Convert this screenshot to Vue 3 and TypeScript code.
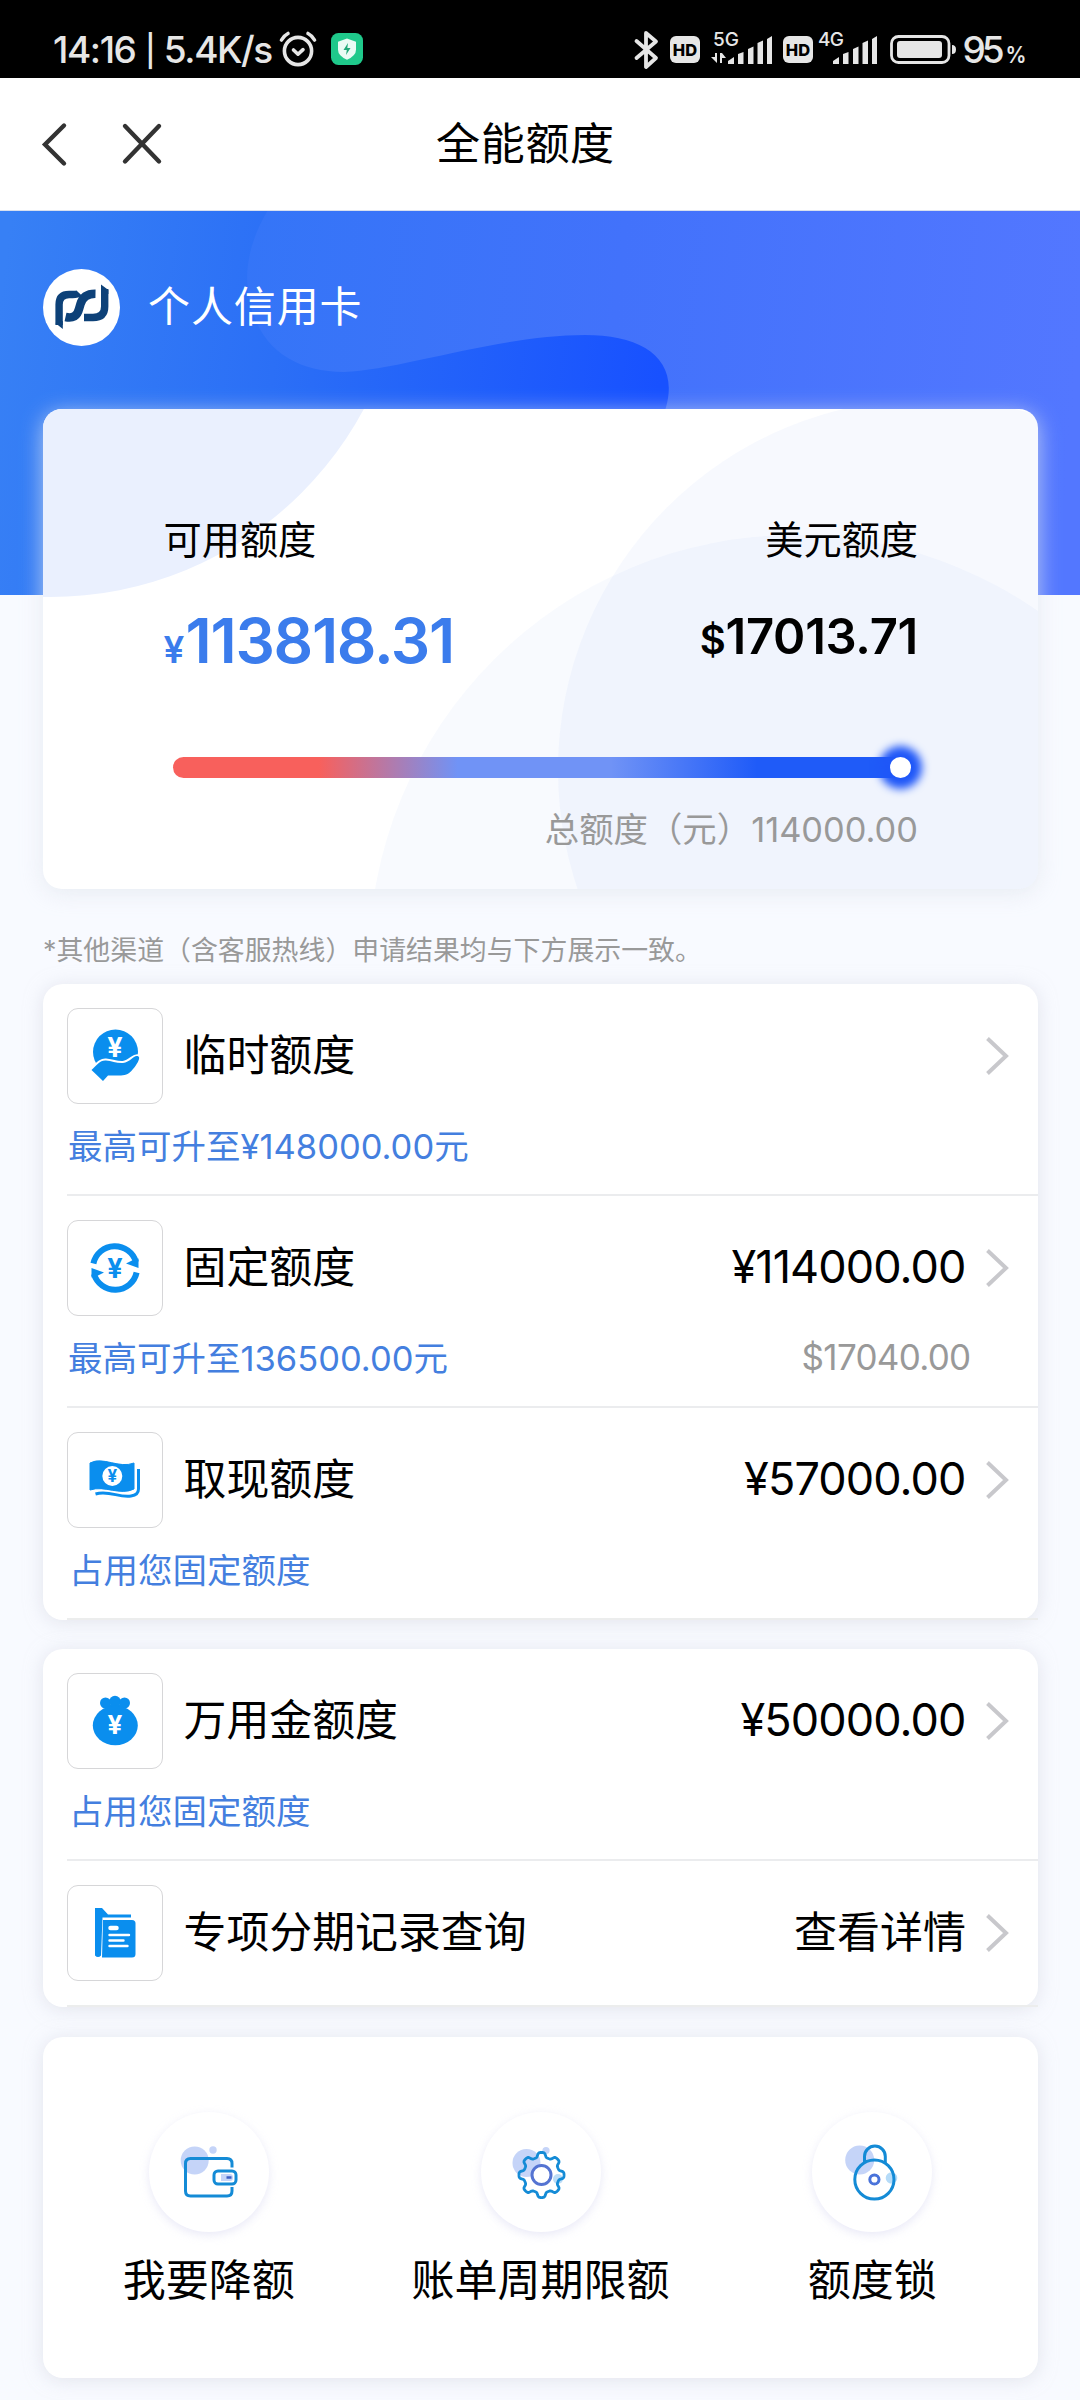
<script setup lang="ts">
interface LimitRow {
  icon: 'hand' | 'cycle' | 'cash' | 'bag' | 'file'
  title: string
  note?: string
  noteIndent?: boolean
  value?: string
  valueIsText?: boolean
  sub?: string
}

const groups: LimitRow[][] = [
  [
    { icon: 'hand', title: '临时额度', note: '最高可升至¥148000.00元' },
    { icon: 'cycle', title: '固定额度', note: '最高可升至136500.00元', value: '¥114000.00', sub: '$17040.00' },
    { icon: 'cash', title: '取现额度', note: '占用您固定额度', noteIndent: true, value: '¥57000.00' },
  ],
  [
    { icon: 'bag', title: '万用金额度', note: '占用您固定额度', noteIndent: true, value: '¥50000.00' },
    { icon: 'file', title: '专项分期记录查询', value: '查看详情', valueIsText: true },
  ],
]

const actions: { icon: 'wallet' | 'gear' | 'lock'; label: string }[] = [
  { icon: 'wallet', label: '我要降额' },
  { icon: 'gear', label: '账单周期限额' },
  { icon: 'lock', label: '额度锁' },
]

// Rounded cog outline: eight teeth around (60.5, 63)
const gearPath = (() => {
  const pts: string[] = []
  const steps = 160
  for (let i = 0; i <= steps; i++) {
    const a = (i / steps) * Math.PI * 2
    const wave = Math.tanh(2.2 * Math.cos(8 * a))
    const r = 20.2 + 2.4 * wave
    pts.push(`${(60.5 + r * Math.cos(a)).toFixed(2)} ${(63 + r * Math.sin(a)).toFixed(2)}`)
  }
  return 'M' + pts.join('L') + 'Z'
})()
</script>

<template>
  <div class="page">
    <div class="status">
      <span class="clock">14:16 <u>|</u> 5.4K/s</span>
      <svg class="alarm" width="38" height="38" viewBox="0 0 38 38" fill="none" stroke="#e6e6e6" stroke-width="3.6" stroke-linecap="round">
        <circle cx="19" cy="21" r="13.6" />
        <path d="M14.5 20l4.5 4.2 5-4.6" stroke-linejoin="round" />
        <path d="M2.500 10q2.500-4.500 6.500-6.500M35.500 10q-2.500-4.500-6.500-6.500" />
      </svg>
      <svg class="guard" width="32" height="32" viewBox="0 0 32 32">
        <rect width="32" height="32" rx="7.500" fill="#1fc98b" />
        <path d="M16 5.500l9 3.300v8q0 6-9 10-9-4-9-10v-8z" fill="#e9fbf4" />
        <path d="M17 10l-4.500 7h3.300l-.8 5 4.500-7h-3.200z" fill="#1fa878" />
      </svg>
      <svg class="signals" width="400" height="78" viewBox="632 0 400 78" fill="#e6e6e6">
        <path d="M636.500 41l19.500 17-10 9V33L656 41.500 636.500 58" fill="none" stroke="#e6e6e6" stroke-width="3.800" stroke-linejoin="round" stroke-linecap="round" />
        <rect x="670" y="36" width="30" height="27" rx="6" />
        <text x="685" y="55.500" text-anchor="middle" font-size="16.500" font-weight="800" fill="#000">HD</text>
        <text x="713" y="46" font-size="19" font-weight="500" textLength="26">5G</text>
        <path d="M711 57h4v-4h2v10zM720 53h2l4 5h-4v5h-2z" />
        <path d="M728 64v-3l6-4v7zM738 64V54l5.500-2v12zM748 64V49l5.500-2.500V64zM757.500 64V43l5.500-2.500V64zM767 64V39l5-3v28z" />
        <rect x="783" y="36" width="30" height="27" rx="6" />
        <text x="798" y="55.500" text-anchor="middle" font-size="16.500" font-weight="800" fill="#000">HD</text>
        <text x="818" y="46" font-size="19" font-weight="500" textLength="26">4G</text>
        <path transform="translate(105 0)" d="M728 64v-3l6-4v7zM738 64V54l5.500-2v12zM748 64V49l5.500-2.500V64zM757.500 64V43l5.500-2.500V64zM767 64V39l5-3v28z" />
        <rect x="891.500" y="36.500" width="57.500" height="26" rx="7" fill="none" stroke="#e6e6e6" stroke-width="2.800" />
        <rect x="897" y="41" width="45" height="17" rx="3" />
        <path d="M952 45q4 0 4 4.500t-4 4.500z" />
        <text x="962.500" y="63" font-size="37" font-weight="500" textLength="42">95</text>
        <text x="1005.500" y="62.500" font-size="23" font-weight="600" textLength="21" lengthAdjust="spacingAndGlyphs">%</text>
      </svg>
    </div>

    <header class="nav">
      <svg width="130" height="60" viewBox="0 0 130 60" fill="none" stroke="#333" stroke-width="4.400" stroke-linecap="round">
        <path d="M23 11.500L4 30.500 23 49.500M84 12l34 35.500M118 12L84 47.500" />
      </svg>
      <h1>全能额度</h1>
    </header>

    <section class="hero">
      <svg class="hero-bg" width="1080" height="384" viewBox="0 211 1080 384">
        <defs>
          <linearGradient id="deep" gradientUnits="userSpaceOnUse" x1="0" y1="300" x2="660" y2="380">
            <stop offset="0" stop-color="#3780f5" />
            <stop offset=".42" stop-color="#2b6ff6" />
            <stop offset="1" stop-color="#1851ff" />
          </linearGradient>
          <linearGradient id="lift" gradientUnits="userSpaceOnUse" x1="240" y1="260" x2="1080" y2="340">
            <stop offset="0" stop-color="#3475f7" />
            <stop offset=".45" stop-color="#4272fb" />
            <stop offset="1" stop-color="#5377ff" />
          </linearGradient>
        </defs>
        <rect y="210" width="1080" height="385" fill="url(#deep)" />
        <path d="M268 210C250 240 245 268 248 290C254 345 292 372 344 372C400 370 500 335 585 335C650 335 690 365 657 430V595H1080V210Z" fill="url(#lift)" />
      </svg>
      <div class="owner">
        <svg width="77" height="77" viewBox="0 0 77 77" fill="none" stroke="#0d4178" stroke-width="7.400">
          <circle cx="38.500" cy="38.500" r="38.500" fill="#fff" stroke="none" />
          <path d="M16.100 56V35.500q0-10 10-10h3.500q5 0 6.500-1.500" />
          <path d="M12.400 54l7.400 6v-8z" fill="#0d4178" stroke="none" />
          <path d="M22.500 48q11 2.500 13.500-8l1.500-5q3-10.500 15-10.300" stroke-width="8.600" />
          <path d="M41 48.500h9q11.700 0 11.700-11V20" />
          <path d="M58 15.500l7.400 5.500v4H58z" fill="#0d4178" stroke="none" />
        </svg>
        <span>个人信用卡</span>
      </div>
    </section>

    <main>
      <section class="balance">
        <svg class="balance-bg" width="995" height="480" viewBox="43 409 995 480">
          <circle cx="50" cy="241" r="356" fill="#eaf0fe" />
          <circle cx="795" cy="961" r="426" fill="#4070f0" fill-opacity=".035" />
          <circle cx="929" cy="770" r="371" fill="#4070f0" fill-opacity=".045" />
        </svg>
        <div class="balance-body">
          <div class="labels"><span>可用额度</span><span>美元额度</span></div>
          <div class="amounts">
            <span class="cny"><i>¥</i>113818.31</span>
            <span class="usd"><i>$</i>17013.71</span>
          </div>
          <div class="track"><b></b></div>
          <div class="total">总额度（元）<em>114000.00</em></div>
        </div>
      </section>

      <p class="tip">*其他渠道（含客服热线）申请结果均与下方展示一致。</p>

      <section v-for="(rows, g) in groups" :key="g" class="group">
        <article v-for="row in rows" :key="row.title" class="row">
          <div class="line">
            <div class="box">
              <svg v-if="row.icon === 'hand'" width="96" height="96" viewBox="0 0 96 96" fill="#0a8eee">
                <circle cx="48.500" cy="44" r="22.500" />
                <path d="M24.500 62C30 57 33 52 39 52.500C45 53 50 55.500 56 55C64 54 67 46 71.500 48.500C74 50 69 58 66 61C61 68 56 67.500 50 67.500H41L36 73Z" stroke="#fff" stroke-width="4" paint-order="stroke" stroke-linejoin="round" />
                <text x="48" y="49" text-anchor="middle" font-size="27" font-weight="700" fill="#fff">¥</text>
              </svg>
              <svg v-else-if="row.icon === 'cycle'" width="96" height="96" viewBox="0 0 96 96" fill="#0a8eee">
                <path d="M26.400 43.500A22 22 0 0 1 69 42" fill="none" stroke="#0a8eee" stroke-width="6" />
                <path d="M69.600 52.500A22 22 0 0 1 27 54" fill="none" stroke="#0a8eee" stroke-width="6" />
                <path d="M71.500 38.500v9.500L59 43.500l8-4zM24.500 57.500V48L37 52.500l-8 4z" />
                <text x="48" y="57.500" text-anchor="middle" font-size="27" font-weight="700">¥</text>
              </svg>
              <svg v-else-if="row.icon === 'cash'" width="96" height="96" viewBox="0 0 96 96" fill="#0a8eee">
                <path d="M23 31C36 24 52 37 67 31V57C53 64 38 53 23 58Z" stroke="#0a8eee" stroke-width="1" stroke-linejoin="round" />
                <path d="M28.500 62C42 58 52 66 64 64Q71.500 63 71.500 57V37" fill="none" stroke="#0a8eee" stroke-width="3" />
                <circle cx="45.300" cy="44" r="10" fill="#fff" />
                <text x="45.300" y="50.200" text-anchor="middle" font-size="17" font-weight="700">¥</text>
              </svg>
              <svg v-else-if="row.icon === 'bag'" width="96" height="96" viewBox="0 0 96 96" fill="#0a8eee">
                <circle cx="38.500" cy="30" r="5.500" />
                <circle cx="48" cy="28.500" r="5.800" />
                <circle cx="57.500" cy="30" r="5.500" />
                <path d="M36 32h24l-2.500 4 5 6H34l4.500-6z" />
                <ellipse cx="48.300" cy="52.500" rx="22.500" ry="19.800" />
                <text x="48" y="60.500" text-anchor="middle" font-size="26" font-weight="700" fill="#fff">¥</text>
              </svg>
              <svg v-else width="96" height="96" viewBox="0 0 96 96" fill="#0a8eee">
                <path d="M28 23h7l6 6.500h23v3H35.500l-1.500 38q-3 3-6 0z" />
                <path d="M36 35h29q3.500 0 3.500 3.500V69q0 3.500-3.500 3.500H35z" />
                <g stroke="#fff" stroke-linecap="round">
                  <path d="M43.500 43h6" stroke-width="4.500" />
                  <path d="M42.500 50h19.500M42.500 55.500h14M42.500 61h18" stroke-width="2.400" />
                </g>
              </svg>
            </div>
            <span class="title">{{ row.title }}</span>
            <span class="value" :class="{ words: row.valueIsText }">{{ row.value }}</span>
            <svg class="chev" width="24" height="40" viewBox="0 0 24 40" fill="none" stroke="#c8c8cc" stroke-width="4">
              <path d="M2.500 2.500L21 20 2.500 37.500" />
            </svg>
          </div>
          <div v-if="row.note" class="note">
            <span :class="{ indent: row.noteIndent }">{{ row.note }}</span>
            <span v-if="row.sub" class="sub">{{ row.sub }}</span>
          </div>
        </article>
      </section>

      <section class="actions">
        <div v-for="act in actions" :key="act.icon" class="action">
          <svg width="120" height="120" viewBox="0 0 120 120" fill="none" stroke="#148bd6" stroke-width="3">
            <template v-if="act.icon === 'wallet'">
              <circle cx="45.700" cy="48.500" r="14" fill="#c5d4f8" stroke="none" />
              <circle cx="64" cy="38" r="3.700" fill="#c5d4f8" stroke="none" />
              <path d="M83 55.500V51.500q0-5-5-5H41.500q-5 0-5 5V79q0 5 5 5H78q5 0 5-5v-4" />
              <rect x="65" y="59" width="22" height="13" rx="4" fill="#fff" />
              <path d="M72 62h9q3 0 3 3.500t-3 3.500h-9z" fill="#c5d4f8" stroke="none" />
              <path d="M77.500 65.500h5" stroke="#3d5fc4" stroke-width="2.600" />
            </template>
            <template v-else-if="act.icon === 'gear'">
              <circle cx="45.500" cy="51" r="14" fill="#c5d4f8" stroke="none" />
              <circle cx="65" cy="38.500" r="3.600" fill="#c5d4f8" stroke="none" />
              <circle cx="77" cy="67" r="5" fill="#bcdcf7" stroke="none" />
              <path :d="gearPath" stroke-linejoin="round" stroke-width="2.800" />
              <circle cx="60.500" cy="63" r="9.500" fill="#fff" stroke="#5574d2" />
            </template>
            <template v-else>
              <circle cx="47.700" cy="48" r="14.500" fill="#c5d4f8" stroke="none" />
              <circle cx="79.500" cy="66" r="5.800" fill="#b5dbf8" stroke="none" />
              <path d="M52.500 51V44.500a10.400 10.400 0 0 1 20.800 0V51" />
              <circle cx="62.400" cy="67.500" r="19.600" />
              <circle cx="62.400" cy="67.500" r="4.600" stroke="#4a73da" />
            </template>
          </svg>
          <span>{{ act.label }}</span>
        </div>
      </section>
    </main>
  </div>
</template>

<style>
body {
  background: #f8faff;
}
</style>

<style scoped>
.page {
  width: 1080px;
  height: 2400px;
  overflow: hidden;
  background: #f8faff;
  color: #000;
  font-family: Inter, "Noto Sans CJK SC", sans-serif;
  display: flex;
  flex-direction: column;
}
i,
em {
  font-style: normal;
}
.status {
  height: 78px;
  flex: none;
  background: #000;
  color: #e6e6e6;
  display: flex;
  align-items: center;
}
.clock {
  margin-left: 53px;
  width: 225px;
  padding-top: 22px;
  font-size: 37px;
  line-height: 44px;
  font-weight: 500;
  letter-spacing: -1.400px;
  white-space: nowrap;
}
.clock u {
  text-decoration: none;
  font-size: 31px;
  vertical-align: 1px;
  padding: 0 1px;
}
.alarm {
  margin: 19px 0 0 1px;
}
.guard {
  margin: 20px 0 0 14px;
}
.signals {
  margin-left: auto;
  margin-right: 48px;
}
.nav {
  height: 132px;
  flex: none;
  background: #fff;
  border-bottom: 1px solid #d9e0ee;
  display: flex;
  align-items: center;
}
.nav svg {
  margin-left: 41px;
}
.nav h1 {
  margin: 0 0 0 265px;
  font-size: 44px;
  line-height: 60px;
  font-weight: 400;
  letter-spacing: 0.700px;
}
.hero {
  display: grid;
  height: 384px;
  flex: none;
}
.hero > * {
  grid-area: 1 / 1;
}
.hero-bg {
  display: block;
}
.owner {
  display: flex;
  align-items: center;
  align-self: start;
  gap: 28px;
  margin: 58px 0 0 43px;
  z-index: 1;
  color: #fff;
  font-size: 42px;
  line-height: 60px;
  letter-spacing: 0.900px;
}
.owner span {
  margin-top: -2px;
}
main {
  margin: -186px 42px 0 43px;
  position: relative;
}
.balance {
  height: 480px;
  border-radius: 19px;
  background: #fff;
  box-shadow: 0 4px 22px rgba(226, 231, 238, 0.750);
  display: grid;
}
.balance > * {
  grid-area: 1 / 1;
}
.balance-bg {
  border-radius: 19px;
}
.balance-body {
  padding: 106px 120px 0 120.500px;
  z-index: 1;
}
.labels {
  display: flex;
  justify-content: space-between;
  font-size: 38.200px;
  line-height: 50px;
}
.amounts {
  display: flex;
  justify-content: space-between;
  align-items: flex-start;
  height: 80px;
  margin-top: 38px;
  font-weight: 600;
  white-space: nowrap;
}
.cny {
  color: #3b7cec;
  font-size: 62px;
  line-height: 76px;
  letter-spacing: -1.300px;
}
.cny i {
  font-size: 37px;
  margin-right: 2.500px;
}
.usd {
  padding-top: 1px;
  font-size: 49px;
  line-height: 66px;
  letter-spacing: -0.300px;
}
.usd i {
  font-size: 40px;
}
.track {
  margin: 74px 0 0 9px;
  width: 730px;
  height: 21px;
  border-radius: 11px;
  background: linear-gradient(90deg, #f8605c 0%, #f8605c 20%, #7093f6 39%, #7093f6 60%, #1f5bf8 80%, #1f5bf8 100%);
  display: flex;
  align-items: center;
  justify-content: flex-end;
}
.track b {
  width: 21px;
  height: 21px;
  margin-right: -8px;
  border-radius: 50%;
  background: #fff;
  box-shadow: 0 0 9px 11px #1f57f8;
}
.total {
  margin-top: 27px;
  text-align: right;
  color: #999;
  font-size: 34.400px;
  line-height: 50px;
  white-space: nowrap;
}
.tip {
  margin: 41px 0 0 0;
  height: 40px;
  color: #999;
  font-size: 26.900px;
  line-height: 40px;
  white-space: nowrap;
}
.group {
  background: #fff;
  border-radius: 20px;
  box-shadow: 0 2px 18px rgba(205, 208, 218, 0.500);
  margin-top: 29px;
}
.tip + .group {
  margin-top: 14px;
}
.row {
  margin-left: 24px;
  padding-top: 24px;
  border-bottom: 2px solid #ebecee;
  height: 186px;
}
.row:not(:has(.note)) {
  height: 120px;
}
.row:last-child {
  border-bottom-color: #eceded;
}
.line {
  display: flex;
  align-items: center;
  height: 96px;
}
.box {
  box-sizing: border-box;
  width: 96px;
  height: 96px;
  border: 1px solid #d6d6d8;
  border-radius: 11px;
  display: flex;
  align-items: center;
  justify-content: center;
  flex: none;
}
.box svg {
  flex: none;
}
.title {
  margin-left: 20.500px;
  font-size: 42.900px;
  line-height: 60px;
  white-space: nowrap;
  margin-top: -2px;
}
.value {
  margin-left: auto;
  margin-right: 19.500px;
  margin-top: -2px;
  font-size: 45px;
  line-height: 60px;
  letter-spacing: -0.900px;
}
.value.words {
  font-size: 43px;
  letter-spacing: 0;
  margin-right: 19px;
}
.chev {
  margin-right: 29px;
  flex: none;
}
.note {
  display: flex;
  justify-content: space-between;
  height: 80px;
  align-items: center;
  color: #447fdf;
  font-size: 34.500px;
  white-space: nowrap;
  padding-left: 1px;
}
.indent {
  padding-left: 1px;
}
.sub {
  color: #999;
  margin-right: 67.500px;
  padding-top: 2px;
  font-size: 35px;
  letter-spacing: -0.700px;
}
.actions {
  margin-top: 30px;
  height: 341px;
  background: #fff;
  border-radius: 20px;
  box-shadow: 0 2px 18px rgba(205, 208, 218, 0.500);
  display: flex;
}
.action {
  flex: 1;
  display: flex;
  flex-direction: column;
  align-items: center;
  padding-top: 75px;
}
.action svg {
  border-radius: 50%;
  box-shadow: 0 3px 10px rgba(200, 200, 235, 0.400);
}
.action span {
  margin-top: 17px;
  font-size: 43px;
  line-height: 62px;
  white-space: nowrap;
}
</style>
